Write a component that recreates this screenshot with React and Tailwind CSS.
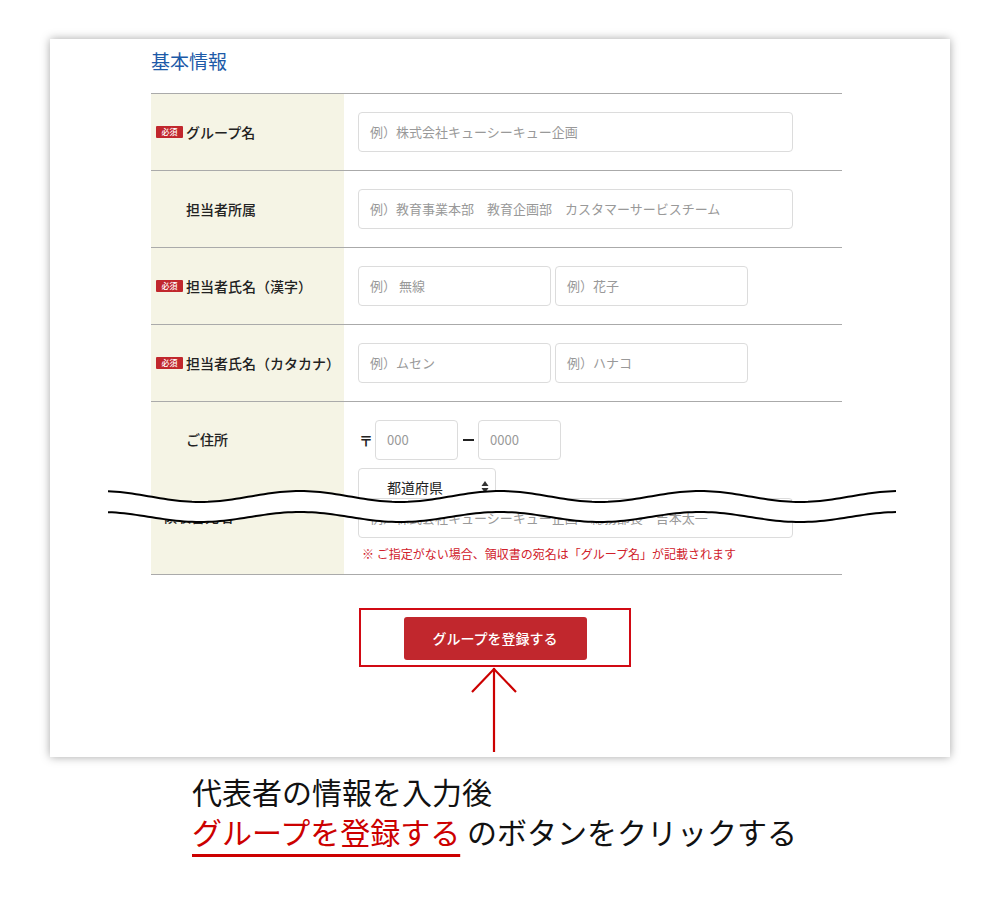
import React from "react";

// sine band drawn across the form to show the cut
function wavePoints(c, a, width) {
  const pts = [];
  for (let x = 0; x <= width; x += 4) {
    const y = c + a * Math.cos((2 * Math.PI * (x + 108 - 200)) / 200);
    pts.push([x, y]);
  }
  return pts;
}

function WaveCut() {
  const w = 790;
  const top = wavePoints(17.5, 5.5, w);
  const bottom = wavePoints(38, 5, w);
  const toStr = (pts) => pts.map(([x, y]) => `${x},${y.toFixed(2)}`).join(" ");
  const band = [...top, ...bottom.slice().reverse()];
  return (
    <svg
      className="absolute left-[58px] top-[440px]"
      width={w}
      height="50"
      viewBox={`0 0 ${w} 50`}
    >
      <polygon points={toStr(band)} fill="#fff" />
      <polyline points={toStr(top)} fill="none" stroke="#000" strokeWidth="2" />
      <polyline points={toStr(bottom)} fill="none" stroke="#000" strokeWidth="2" />
    </svg>
  );
}

function Badge() {
  return (
    <span className="mr-[3px] inline-flex h-[12px] w-[27px] items-center justify-center rounded-[1px] bg-[#c1272d] text-[8px] leading-none text-white">
      必須
    </span>
  );
}

function Label({ required, children }) {
  return (
    <div className="flex items-center bg-[#f5f4e5] pl-[5px] text-[14px] font-medium text-[#222]">
      {required ? <Badge /> : <span className="mr-[3px] w-[27px]" />}
      {children}
    </div>
  );
}

function Field({ placeholder, w = "w-[435px]" }) {
  return (
    <div
      className={`${w} flex h-[40px] items-center rounded-[4px] border border-[#dcdcdc] bg-white px-[11px] text-[13px] text-[#999]`}
    >
      {placeholder}
    </div>
  );
}

function Row({ label, required, children }) {
  return (
    <div className="grid grid-cols-[193px_1fr] border-b border-[#aaa]">
      <Label required={required}>{label}</Label>
      <div className="pl-[14px] py-[18px]">{children}</div>
    </div>
  );
}

export default function App() {
  return (
    <div className="min-h-[900px] bg-white pt-[39px] font-['Noto_Sans_CJK_JP','Noto_Sans',sans-serif]">
      <div className="relative ml-[50px] h-[718px] w-[900px] bg-white pl-[101px] pt-[8px] shadow-[0_0_9px_rgba(0,0,0,0.35)]">
        <h2 className="text-[19px] leading-[28px] text-[#1d5aa8]">基本情報</h2>

        <div className="mt-[18px] w-[691px] border-t border-[#aaa]">
          <Row label="グループ名" required>
            <Field placeholder="例）株式会社キューシーキュー企画" />
          </Row>
          <Row label="担当者所属">
            <Field placeholder="例）教育事業本部　教育企画部　カスタマーサービスチーム" />
          </Row>
          <Row label="担当者氏名（漢字）" required>
            <div className="flex gap-[4px]">
              <Field w="w-[193px]" placeholder="例） 無線" />
              <Field w="w-[193px]" placeholder="例）花子" />
            </div>
          </Row>
          <Row label="担当者氏名（カタカナ）" required>
            <div className="flex gap-[4px]">
              <Field w="w-[193px]" placeholder="例）ムセン" />
              <Field w="w-[193px]" placeholder="例）ハナコ" />
            </div>
          </Row>

          {/* address row, cut under the wave */}
          <div className="grid h-[96px] grid-cols-[193px_1fr] overflow-hidden">
            <div className="flex items-start bg-[#f5f4e5] pl-[5px] pt-[27px] text-[14px] font-medium text-[#222]">
              <span className="mr-[3px] w-[27px]" />
              ご住所
            </div>
            <div className="pl-[14px] pt-[18px]">
              <div className="flex items-center">
                <span className="w-[17px] pl-[1px] text-[14px] font-bold text-[#222]">〒</span>
                <Field w="w-[83px]" placeholder="000" />
                <span className="flex w-[20px] justify-center">
                  <span className="h-[2px] w-[11px] bg-[#222]" />
                </span>
                <Field w="w-[83px]" placeholder="0000" />
              </div>
              <div className="mt-[8px] flex h-[38px] w-[138px] items-center justify-between rounded-[4px] border border-[#dcdcdc] bg-white pl-[28px] pr-[6px] text-[14px] text-[#222]">
                都道府県
                <svg width="8" height="14" viewBox="0 0 8 14">
                  <path d="M4 1 L7.5 6 H0.5 Z" fill="#333" />
                  <path d="M4 13 L7.5 8 H0.5 Z" fill="#333" />
                </svg>
              </div>
            </div>
          </div>

          <div className="grid grid-cols-[193px_1fr] border-b border-[#aaa]">
            <div className="bg-[#f5f4e5] pl-[12px] pt-[8px] text-[14px] font-medium leading-[20px] text-[#222]">
              領収書宛名
            </div>
            <div className="pl-[14px] pb-[12px]">
              <Field placeholder="例）株式会社キューシーキュー企画　総務部長　吉本太一" />
              <p className="mt-[8px] pl-[4px] text-[12px] leading-[16px] text-[#d0202a]">
                ※ ご指定がない場合、領収書の宛名は「グループ名」が記載されます
              </p>
            </div>
          </div>
        </div>

        <div className="flex w-[691px] flex-col items-center pt-[33px]">
          <div className="-ml-[3px] flex h-[59px] w-[272px] justify-center border-2 border-[#d10a14] pt-[7px]">
            <button className="h-[43px] w-[183px] rounded-[3px] bg-[#c1272d] text-[14px] font-medium text-white">
              グループを登録する
            </button>
          </div>
          <svg className="-ml-[5px]" width="50" height="86" viewBox="0 0 50 86">
            <path d="M25 1 V85" stroke="#cc0000" strokeWidth="2.2" fill="none" />
            <path d="M3 25 L25 2 L47 25" stroke="#cc0000" strokeWidth="2.2" fill="none" />
          </svg>
        </div>

        <WaveCut />
      </div>

      <div className="mt-[14px] pl-[192px] text-[30px] leading-[40px] text-[#111]">
        <p>代表者の情報を入力後</p>
        <p>
          <span className="text-[#cc0000] underline decoration-[#cc0000] decoration-[3px] underline-offset-[10px]">
            グループを登録する
          </span>{" "}
          のボタンをクリックする
        </p>
      </div>
    </div>
  );
}
